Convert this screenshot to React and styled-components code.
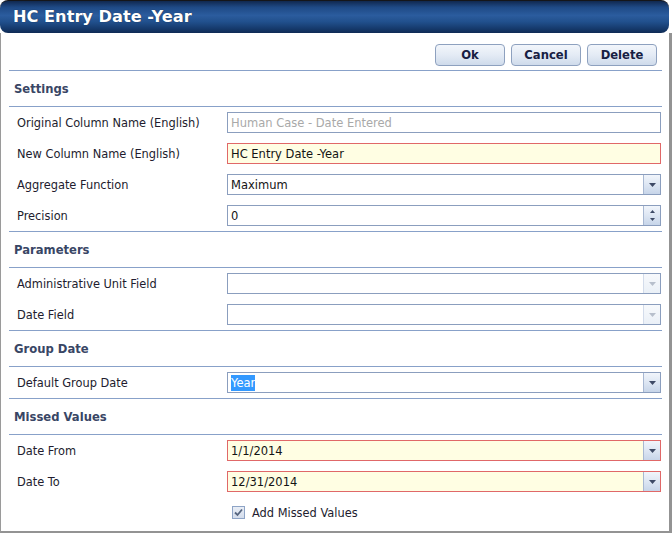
import React from 'react';
import styled, { createGlobalStyle, css } from 'styled-components';

const GlobalStyle = createGlobalStyle`
  html, body {
    margin: 0;
    padding: 0;
    background: #ffffff;
  }
  body {
    font-family: "DejaVu Sans", Verdana, sans-serif;
  }
`;

const Dialog = styled.div`
  display: flex;
  flex-direction: column;
  width: 672px;
  height: 533px;
  box-sizing: border-box;
`;

const TitleBar = styled.div`
  display: flex;
  align-items: center;
  height: 33px;
  margin-right: 3px;
  padding: 0 0 1px 13px;
  box-sizing: border-box;
  border-radius: 8px;
  border-top: 1px solid #15161a;
  background: linear-gradient(
    #10284f 0%,
    #1f4a86 20%,
    #2b5c9e 45%,
    #21508d 65%,
    #163b6e 85%,
    #0f2b55 100%
  );
  color: #ffffff;
  font-weight: bold;
  font-size: 16.2px;
  text-shadow: 0 0 1px rgba(0, 0, 0, 0.6);
`;

const Body = styled.div`
  flex: 1;
  display: flex;
  flex-direction: column;
  border-left: 1px solid #9a9a9a;
  border-right: 3px solid #939393;
  border-bottom: 2px solid #939393;
  padding: 0 7px 0 8px;
  box-sizing: border-box;
`;

const Toolbar = styled.div`
  display: flex;
  justify-content: flex-end;
  gap: 6px;
  padding: 11px 5px 4px 0;
`;

const Button = styled.button`
  width: 70px;
  height: 22px;
  padding: 0;
  border: 1px solid #8ea1bf;
  border-radius: 4px;
  background: linear-gradient(#f3f6fb 0%, #e4ebf5 50%, #cfdbeb 100%);
  color: #172043;
  font-family: "DejaVu Sans", Verdana, sans-serif;
  font-weight: bold;
  font-size: 11.6px;
`;

const Section = styled.div`
  border-top: 1px solid #88a1c9;
`;

const SectionHeader = styled.div`
  display: flex;
  align-items: center;
  height: 35px;
  padding-left: 5px;
  border-bottom: 1px solid #88a1c9;
  color: #394665;
  font-weight: bold;
  font-size: 11.6px;
`;

const Rows = styled.div`
  display: flex;
  flex-direction: column;
  gap: 10px;
  padding: 5px 0;
`;

const Row = styled.div`
  display: grid;
  grid-template-columns: 218px 1fr;
  align-items: center;
  height: 21px;
  padding-right: 1px;
`;

const Label = styled.div`
  padding-left: 8px;
  color: #221c2e;
  font-size: 11.4px;
`;

const Field = styled.div`
  display: flex;
  height: 21px;
  box-sizing: border-box;
  border: 1px solid #8b9ebe;
  background: #ffffff;
  ${(p) =>
    p.$required &&
    css`
      border-color: #e06868;
      background: #fffee3;
    `}
`;

const FieldText = styled.div`
  flex: 1;
  display: flex;
  align-items: center;
  padding-left: 3px;
  color: ${(p) => (p.$muted ? '#a9a9a9' : '#141414')};
  font-size: 11.5px;
  white-space: nowrap;
  overflow: hidden;
`;

const Selected = styled.span`
  background: #3399ff;
  color: #ffffff;
  padding: 1px 0;
`;

const ArrowButton = styled.div`
  display: flex;
  flex-direction: column;
  align-items: center;
  justify-content: center;
  gap: 5px;
  width: 16px;
  border-left: 1px solid ${(p) => (p.$disabled ? '#d3dceb' : '#a8b8d2')};
  background: ${(p) =>
    p.$disabled
      ? 'linear-gradient(#f7f9fc, #eaf0f7)'
      : 'linear-gradient(#f1f5fb 0%, #dde6f3 50%, #c7d5e9 100%)'};
`;

const CheckRow = styled.label`
  display: flex;
  align-items: center;
  gap: 7px;
  padding-left: 5px;
  color: #221c2e;
  font-size: 11.4px;
`;

const CheckBox = styled.span`
  display: flex;
  align-items: center;
  justify-content: center;
  width: 13px;
  height: 13px;
  box-sizing: border-box;
  border: 1px solid #8ea4c6;
  background: linear-gradient(#e9eef6, #d3dceb);
`;

const Triangle = ({ up, color, small }) => {
  const w = small ? 5 : 7;
  const h = small ? 3 : 4;
  return (
    <svg width={w} height={h} viewBox={`0 0 ${w} ${h}`}>
      <polygon
        points={up ? `0,${h} ${w},${h} ${w / 2},0` : `0,0 ${w},0 ${w / 2},${h}`}
        fill={color}
      />
    </svg>
  );
};

const Dropdown = ({ children, required, disabled }) => (
  <Field $required={required}>
    <FieldText>{children}</FieldText>
    <ArrowButton $disabled={disabled}>
      <Triangle color={disabled ? '#b7bfcc' : '#3e4a66'} />
    </ArrowButton>
  </Field>
);

const Spinner = ({ children }) => (
  <Field>
    <FieldText>{children}</FieldText>
    <ArrowButton>
      <Triangle up small color="#3e4a66" />
      <Triangle small color="#3e4a66" />
    </ArrowButton>
  </Field>
);

const FormRow = ({ label, children }) => (
  <Row>
    <Label>{label}</Label>
    {children}
  </Row>
);

const App = () => (
  <>
    <GlobalStyle />
    <Dialog>
      <TitleBar>HC Entry Date -Year</TitleBar>
      <Body>
        <Toolbar>
          <Button>Ok</Button>
          <Button>Cancel</Button>
          <Button>Delete</Button>
        </Toolbar>

        <Section>
          <SectionHeader>Settings</SectionHeader>
          <Rows>
            <FormRow label="Original Column Name (English)">
              <Field>
                <FieldText $muted>Human Case - Date Entered</FieldText>
              </Field>
            </FormRow>
            <FormRow label="New Column Name (English)">
              <Field $required>
                <FieldText>HC Entry Date -Year</FieldText>
              </Field>
            </FormRow>
            <FormRow label="Aggregate Function">
              <Dropdown>Maximum</Dropdown>
            </FormRow>
            <FormRow label="Precision">
              <Spinner>0</Spinner>
            </FormRow>
          </Rows>
        </Section>

        <Section>
          <SectionHeader>Parameters</SectionHeader>
          <Rows>
            <FormRow label="Administrative Unit Field">
              <Dropdown disabled />
            </FormRow>
            <FormRow label="Date Field">
              <Dropdown disabled />
            </FormRow>
          </Rows>
        </Section>

        <Section>
          <SectionHeader>Group Date</SectionHeader>
          <Rows>
            <FormRow label="Default Group Date">
              <Dropdown>
                <Selected>Year</Selected>
              </Dropdown>
            </FormRow>
          </Rows>
        </Section>

        <Section>
          <SectionHeader>Missed Values</SectionHeader>
          <Rows>
            <FormRow label="Date From">
              <Dropdown required>1/1/2014</Dropdown>
            </FormRow>
            <FormRow label="Date To">
              <Dropdown required>12/31/2014</Dropdown>
            </FormRow>
            <FormRow label="">
              <CheckRow>
                <CheckBox>
                  <svg width="9" height="9" viewBox="0 0 9 9">
                    <path
                      d="M1 4.5 L3.5 7 L8 1.5"
                      fill="none"
                      stroke="#56657f"
                      strokeWidth="1.8"
                    />
                  </svg>
                </CheckBox>
                Add Missed Values
              </CheckRow>
            </FormRow>
          </Rows>
        </Section>
      </Body>
    </Dialog>
  </>
);

export default App;
